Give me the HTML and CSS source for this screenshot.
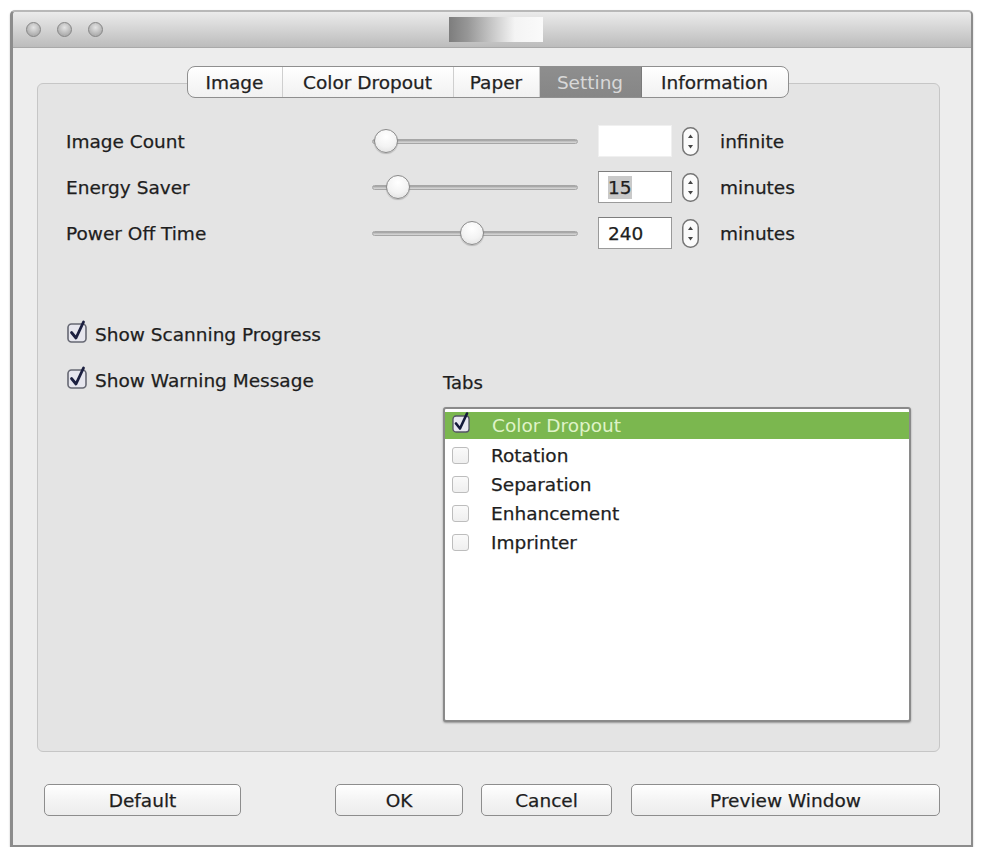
FILE: index.html
```html
<!DOCTYPE html>
<html>
<head>
<meta charset="utf-8">
<link rel="stylesheet" href="styles.css">
</head>
<body>
<div class="window">
  <div class="titlebar">
    <div class="lights"><span class="light"></span><span class="light"></span><span class="light"></span></div>
    <div class="title-img"></div>
    <div></div>
  </div>
  <div class="content">
    <div class="tabs">
      <div class="tab t-image">Image</div>
      <div class="tab t-dropout">Color Dropout</div>
      <div class="tab t-paper">Paper</div>
      <div class="tab t-setting selected">Setting</div>
      <div class="tab t-info">Information</div>
    </div>
    <div class="pane">
      <div class="rows">
        <div class="row">
          <div class="label">Image Count</div>
          <div class="slider"><div class="track"></div><div class="knob" style="left:2px"></div></div>
          <div class="field blank"></div>
          <div class="stepper"><svg width="17" height="29" viewBox="0 0 17 29"><rect x="0.75" y="0.75" width="15.5" height="27.5" rx="7.5" fill="#fbfbfb" stroke="#767676" stroke-width="1.5"/><path d="M6 11 L8.5 7.5 L11 11 Z" fill="#444"/><path d="M6 18 L8.5 21.5 L11 18 Z" fill="#444"/></svg></div>
          <div class="unit">infinite</div>
        </div>
        <div class="row">
          <div class="label">Energy Saver</div>
          <div class="slider"><div class="track"></div><div class="knob" style="left:14px"></div></div>
          <div class="field"><span class="sel">15</span></div>
          <div class="stepper"><svg width="17" height="29" viewBox="0 0 17 29"><rect x="0.75" y="0.75" width="15.5" height="27.5" rx="7.5" fill="#fbfbfb" stroke="#767676" stroke-width="1.5"/><path d="M6 11 L8.5 7.5 L11 11 Z" fill="#444"/><path d="M6 18 L8.5 21.5 L11 18 Z" fill="#444"/></svg></div>
          <div class="unit">minutes</div>
        </div>
        <div class="row">
          <div class="label">Power Off Time</div>
          <div class="slider"><div class="track"></div><div class="knob" style="left:88px"></div></div>
          <div class="field">240</div>
          <div class="stepper"><svg width="17" height="29" viewBox="0 0 17 29"><rect x="0.75" y="0.75" width="15.5" height="27.5" rx="7.5" fill="#fbfbfb" stroke="#767676" stroke-width="1.5"/><path d="M6 11 L8.5 7.5 L11 11 Z" fill="#444"/><path d="M6 18 L8.5 21.5 L11 18 Z" fill="#444"/></svg></div>
          <div class="unit">minutes</div>
        </div>
      </div>
      <div class="lower">
        <div class="checks">
          <div class="check-row">
            <svg class="cb" width="21" height="23" viewBox="0 0 21 23"><rect x="1" y="4" width="18" height="18" rx="3.5" fill="#e6e6ee" stroke="#666873" stroke-width="1.6"/><path d="M4.5 12.5 L9 18 L16.5 2" fill="none" stroke="#1c2040" stroke-width="2.8" stroke-linecap="round" stroke-linejoin="round"/></svg>
            <span>Show Scanning Progress</span>
          </div>
          <div class="check-row">
            <svg class="cb" width="21" height="23" viewBox="0 0 21 23"><rect x="1" y="4" width="18" height="18" rx="3.5" fill="#e6e6ee" stroke="#666873" stroke-width="1.6"/><path d="M4.5 12.5 L9 18 L16.5 2" fill="none" stroke="#1c2040" stroke-width="2.8" stroke-linecap="round" stroke-linejoin="round"/></svg>
            <span>Show Warning Message</span>
          </div>
        </div>
        <div class="tabs-group">
          <div class="group-label">Tabs</div>
          <div class="list">
            <div class="item active">
              <svg class="lcb" width="19" height="21" viewBox="0 0 19 21"><rect x="1" y="4" width="16" height="16" rx="3" fill="#e8e8f0" stroke="#556" stroke-width="1.3"/><path d="M4 11.5 L8 16.5 L15 1.5" fill="none" stroke="#141a3a" stroke-width="2.6" stroke-linecap="round" stroke-linejoin="round"/></svg>
              <span>Color Dropout</span>
            </div>
            <div class="item"><span class="lbox"></span><span>Rotation</span></div>
            <div class="item"><span class="lbox"></span><span>Separation</span></div>
            <div class="item"><span class="lbox"></span><span>Enhancement</span></div>
            <div class="item"><span class="lbox"></span><span>Imprinter</span></div>
          </div>
        </div>
      </div>
    </div>
    <div class="buttons">
      <div class="btn b-default">Default</div>
      <div class="btn b-ok">OK</div>
      <div class="btn b-cancel">Cancel</div>
      <div class="btn b-preview">Preview Window</div>
    </div>
  </div>
</div>
</body>
</html>
```

FILE: styles.css
```css
html, body {
  margin: 0;
  padding: 0;
  background: #ffffff;
}

body {
  font-family: "DejaVu Sans", "Liberation Sans", sans-serif;
  color: #1e1e1e;
  -webkit-text-stroke: 0.25px;
}

.window {
  margin: 10px 0 0 10px;
  width: 958px;
  border: 2px solid #8c8c8c;
  border-left-width: 3px;
  border-top-color: #b8b8b8;
  border-radius: 5px 5px 0 0;
  background: #ededed;
  box-shadow: 0 1px 2px rgba(0,0,0,0.25);
}

.titlebar {
  height: 36px;
  display: grid;
  grid-template-columns: 1fr auto 1fr;
  align-items: center;
  background: linear-gradient(#ebebeb, #d6d6d6 45%, #bcbcbc);
  border-bottom: 1px solid #a9a9a9;
  box-sizing: border-box;
  border-radius: 4px 4px 0 0;
}

.lights {
  display: flex;
  gap: 16px;
  padding-left: 13px;
}

.light {
  width: 13px;
  height: 13px;
  border-radius: 50%;
  background: radial-gradient(circle at 50% 35%, #e4e4e4, #b0b0b0 70%);
  border: 1px solid #858585;
}

.title-img {
  width: 94px;
  height: 25px;
  margin-left: 8px;
  background: linear-gradient(90deg, #7d7d7d, #979797 20%, #c6c6c6 45%, #f4f4f4 70%, #fafafa);
}

.content {
  padding: 18px 31px 29px 24px;
}

.tabs {
  position: relative;
  z-index: 1;
  display: flex;
  width: max-content;
  margin: 0 auto -15px;
  height: 32px;
  box-sizing: border-box;
  border: 1px solid #8f8f8f;
  border-radius: 8px;
  overflow: hidden;
  background: linear-gradient(#ffffff, #f1f1f1);
  transform: translateX(-1px);
}

.tab {
  display: flex;
  align-items: center;
  justify-content: center;
  font-size: 18.5px;
  color: #222;
  border-right: 1px solid #cfcfcf;
  box-sizing: border-box;
}

.tab:last-child { border-right: none; }

.t-image { width: 95px; }
.t-dropout { width: 171px; }
.t-paper { width: 86px; }
.t-setting { width: 102px; }
.t-info { width: 146px; }

.tab.selected {
  background: linear-gradient(#8e8e8e, #868686);
  color: #d8d8d8;
  -webkit-text-stroke: 0;
  border-right-color: #7a7a7a;
}

.pane {
  height: 669px;
  box-sizing: border-box;
  background: #e4e4e4;
  border: 1px solid #c6c6c6;
  border-radius: 6px;
  padding: 41px 27px 0 28px;
}

.rows {
  display: flex;
  flex-direction: column;
  gap: 14px;
}

.row {
  display: flex;
  align-items: center;
  height: 32px;
  font-size: 18.5px;
}

.label {
  width: 306px;
}

.slider {
  position: relative;
  width: 206px;
  height: 26px;
  display: flex;
  align-items: center;
}

.track {
  width: 100%;
  height: 5px;
  border-radius: 3px;
  background: linear-gradient(#9c9c9c, #c9c9c9 60%, #d8d8d8);
  border: 1px solid #a6a6a6;
  box-sizing: border-box;
}

.knob {
  position: absolute;
  top: 1px;
  width: 24px;
  height: 24px;
  box-sizing: border-box;
  border-radius: 50%;
  border: 1px solid #8a8a8a;
  background: radial-gradient(circle at 50% 30%, #ffffff, #f3f3f3 55%, #dcdcdc);
  box-shadow: 0 1px 1px rgba(0,0,0,0.2);
}

.field {
  margin-left: 20px;
  width: 74px;
  height: 32px;
  box-sizing: border-box;
  background: #ffffff;
  border: 1px solid #9a9a9a;
  border-top-color: #7d7d7d;
  padding-left: 9px;
  display: flex;
  align-items: center;
  font-size: 18.5px;
}

.field.blank {
  border-color: #f0f0f0;
}

.sel {
  background: #c9c9c9;
  padding: 1px 0;
}

.stepper {
  margin-left: 10px;
  display: flex;
  height: 29px;
}

.unit {
  margin-left: 21px;
}

.lower {
  margin-top: 73px;
  display: grid;
  grid-template-columns: 377px 1fr;
}

.checks {
  display: flex;
  flex-direction: column;
  gap: 22px;
}

.check-row {
  display: flex;
  align-items: center;
  height: 24px;
  font-size: 18.5px;
  padding-left: 1px;
}

.check-row .cb {
  margin-right: 7px;
  margin-top: -5px;
}

.tabs-group {
  margin-top: 50px;
}

.group-label {
  font-size: 18px;
  line-height: 22px;
  margin-bottom: 13px;
}

.list {
  width: 468px;
  height: 315px;
  box-sizing: border-box;
  background: #ffffff;
  border: 2px solid #8a8a8a;
  border-radius: 3px;
  box-shadow: 0 1px 2px rgba(0,0,0,0.35);
  padding-top: 3px;
}

.item {
  display: flex;
  align-items: center;
  height: 29px;
  padding-left: 7px;
  font-size: 18.5px;
}

.item.active {
  background: #7bb74f;
  color: #dff3c8;
  -webkit-text-stroke: 0;
  height: 27px;
  margin-bottom: 2px;
}

.lcb {
  margin-top: -6px;
  margin-right: 21px;
}

.lbox {
  width: 17px;
  height: 17px;
  box-sizing: border-box;
  border: 1px solid #bdbdbd;
  border-radius: 3px;
  background: linear-gradient(#fafafa, #efefef);
  margin-right: 22px;
}

.buttons {
  display: flex;
  margin-top: 32px;
  padding-left: 7px;
}

.btn {
  height: 32px;
  box-sizing: border-box;
  border: 1px solid #8d8d8d;
  border-radius: 5px;
  background: linear-gradient(#ffffff, #f4f4f4 50%, #ececec);
  display: flex;
  align-items: center;
  justify-content: center;
  font-size: 18.5px;
}

.b-default { width: 197px; }
.b-ok { width: 128px; margin-left: 94px; }
.b-cancel { width: 131px; margin-left: 18px; }
.b-preview { width: 309px; margin-left: 19px; }
```
